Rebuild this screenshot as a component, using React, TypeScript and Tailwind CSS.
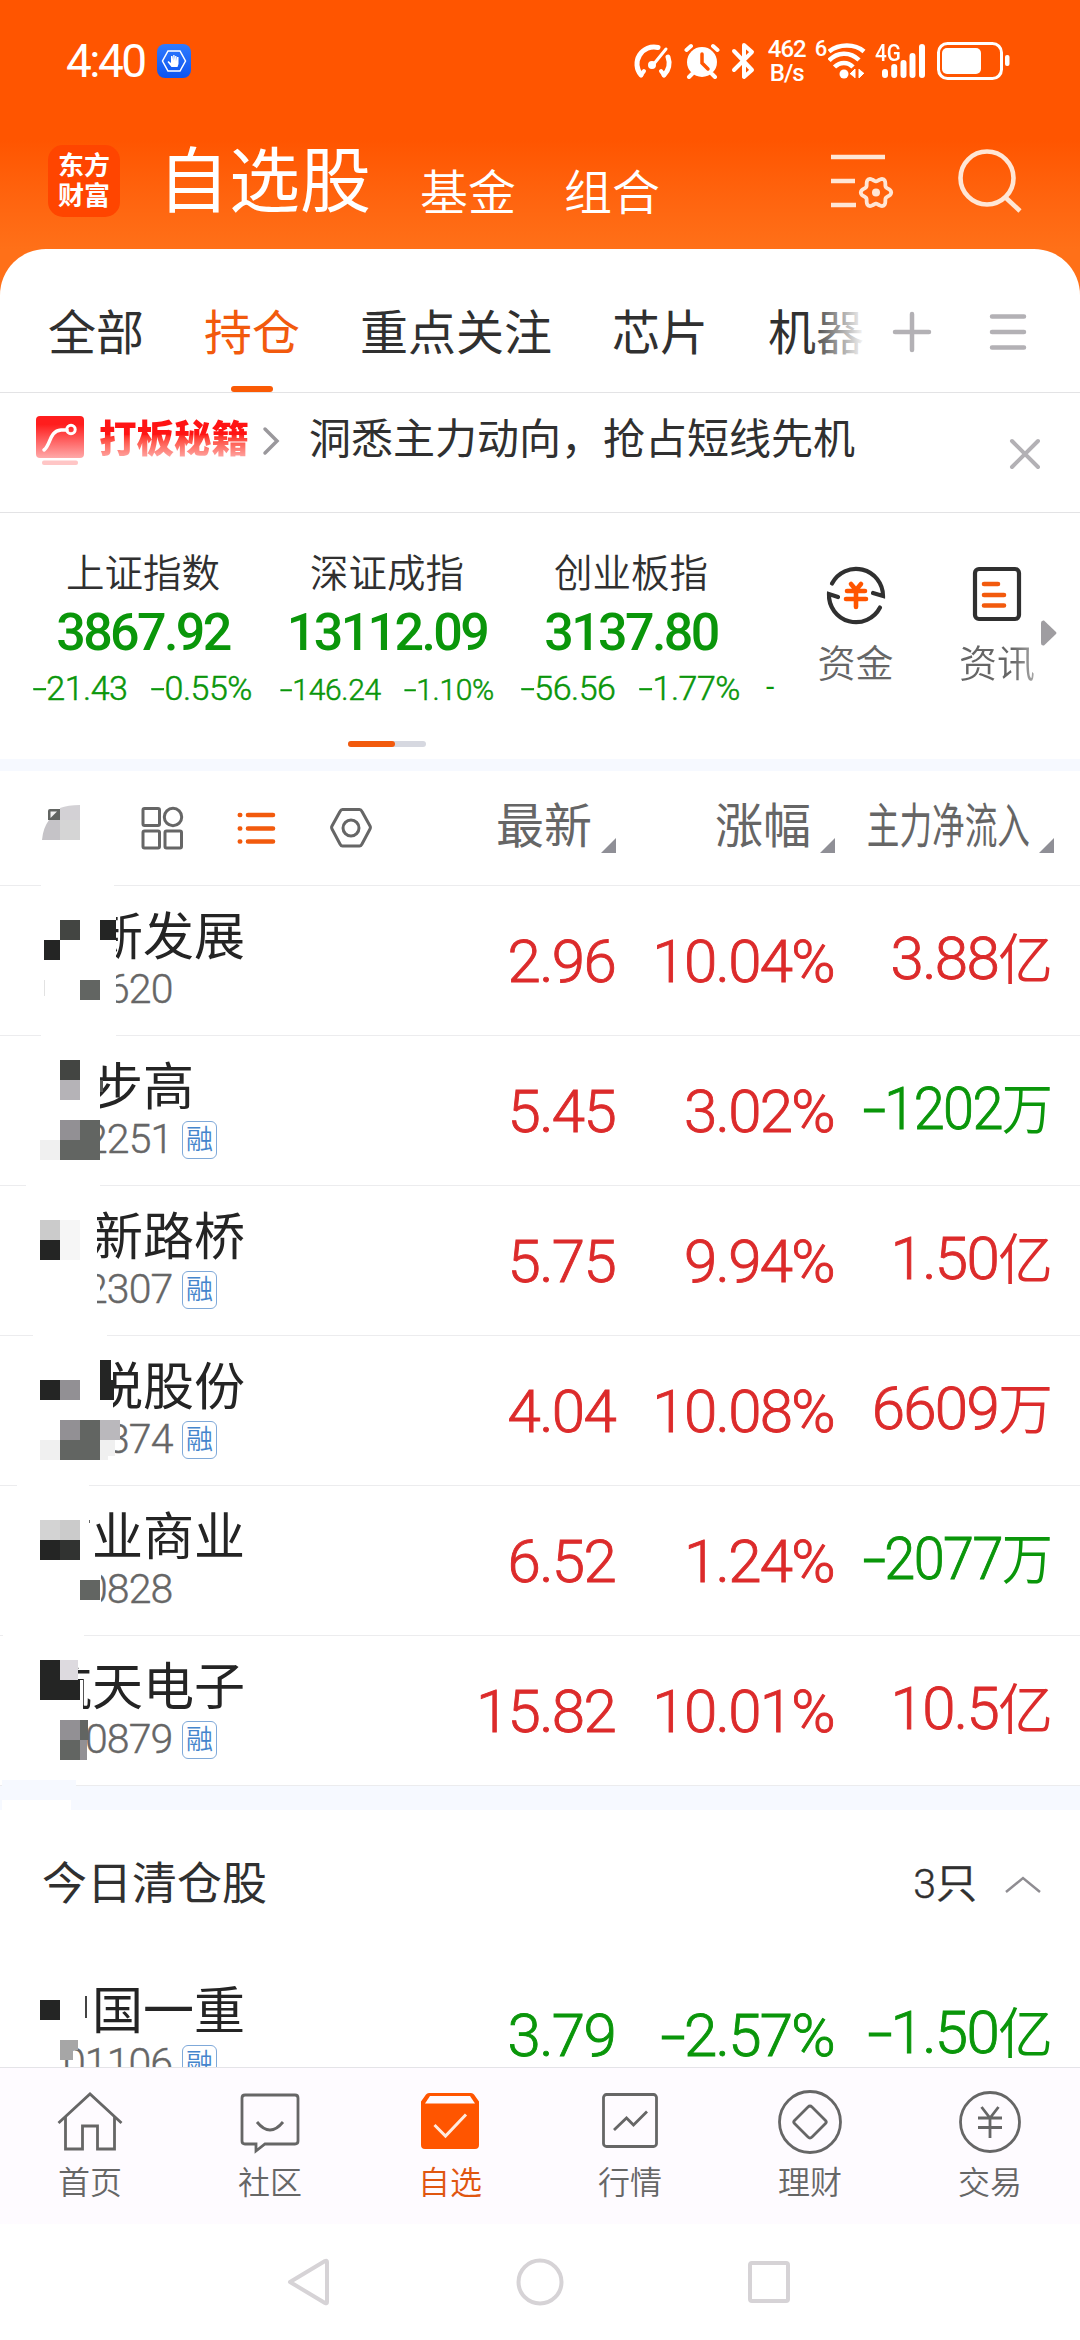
import { useState, type ReactNode } from "react";

type Block = [x: number, y: number, w: number, h: number, fill: string];

type Stock = {
  name: string;
  nameClass: string;
  code: string;
  codeClass: string;
  margin: boolean; // margin trading badge
  price: string;
  change: string;
  flow: string;
  flowClass: string;
  blocks: Block[];
};

const STOCKS: Stock[] = [
  {
    name: "新发展",
    nameClass: "pl-[92px]",
    code: "620",
    codeClass: "pl-[107px]",
    margin: false,
    price: "2.96",
    change: "10.04%",
    flow: "3.88亿",
    flowClass: "",
    blocks: [
      [41, -1, 73, 1, "#fff"],
      [41, 0, 75, 150, "#fff"],
      [44, 94, 1, 16, "#e2e2e2"],
      [60, 34, 20, 20, "#434542"],
      [44, 54, 16, 20, "#242524"],
      [100, 34, 16, 20, "#242524"],
      [80, 94, 20, 20, "#626562"],
    ],
  },
  {
    name: "步高",
    nameClass: "pl-[92px]",
    code: "2251",
    codeClass: "pl-[85px]",
    margin: true,
    price: "5.45",
    change: "3.02%",
    flow: "-1202万",
    flowClass: "scale-x-[0.93]",
    blocks: [
      [26, 0, 74, 150, "#fff"],
      [60, 24, 20, 20, "#434542"],
      [60, 44, 20, 20, "#b5b3b7"],
      [100, 44, 3, 12, "#565856"],
      [60, 84, 20, 20, "#929094"],
      [80, 84, 20, 40, "#626562"],
      [60, 104, 20, 20, "#626562"],
      [40, 104, 20, 20, "#f0f0f0"],
    ],
  },
  {
    name: "新路桥",
    nameClass: "pl-[92px]",
    code: "2307",
    codeClass: "pl-[85px]",
    margin: true,
    price: "5.75",
    change: "9.94%",
    flow: "1.50亿",
    flowClass: "",
    blocks: [
      [33, 80, 64, 3, "#fff"],
      [33, 126, 74, 24, "#fff"],
      [33, 0, 64, 150, "#fff"],
      [97, 100, 3, 12, "#fff"],
      [40, 34, 20, 20, "#cbcbcb"],
      [60, 34, 20, 40, "#f6f6f6"],
      [40, 54, 20, 20, "#242524"],
    ],
  },
  {
    name: "悦股份",
    nameClass: "pl-[92px]",
    code: "374",
    codeClass: "pl-[107px]",
    margin: true,
    price: "4.04",
    change: "10.08%",
    flow: "6609万",
    flowClass: "",
    blocks: [
      [17, 0, 72, 150, "#fff"],
      [80, 0, 33, 84, "#fff"],
      [80, 84, 35, 42, "#fff"],
      [40, 44, 20, 20, "#242524"],
      [60, 44, 20, 20, "#929094"],
      [100, 24, 11, 40, "#242524"],
      [111, 44, 3, 20, "#242524"],
      [60, 84, 20, 20, "#929094"],
      [80, 84, 20, 20, "#626562"],
      [100, 84, 20, 20, "#bab8bc"],
      [40, 104, 20, 20, "#f0f0f0"],
      [60, 104, 40, 20, "#626562"],
      [100, 104, 15, 16, "#f0f0f0"],
      [100, 120, 8, 4, "#f0f0f0"],
    ],
  },
  {
    name: "业商业",
    nameClass: "pl-[92px]",
    code: "0828",
    codeClass: "pl-[85px]",
    margin: false,
    price: "6.52",
    change: "1.24%",
    flow: "-2077万",
    flowClass: "scale-x-[0.93]",
    blocks: [
      [3, 130, 81, 20, "#fff"],
      [80, 84, 21, 42, "#fff"],
      [89, 34, 1, 3, "#666"],
      [40, 34, 20, 20, "#d3d3d3"],
      [60, 34, 20, 20, "#cbcbcb"],
      [40, 54, 20, 20, "#242524"],
      [60, 54, 20, 20, "#313331"],
      [80, 94, 20, 20, "#626562"],
    ],
  },
  {
    name: "航天电子",
    nameClass: "pl-[41px]",
    code: "0879",
    codeClass: "pl-[85px]",
    margin: true,
    price: "15.82",
    change: "10.01%",
    flow: "10.5亿",
    flowClass: "",
    blocks: [
      [2, 144, 74, 6, "#f6f9ff"],
      [40, 14, 38, 70, "#fff"],
      [76, 44, 7, 40, "#fff"],
      [40, 24, 20, 40, "#242524"],
      [60, 24, 18, 20, "#dddadf"],
      [60, 44, 20, 20, "#242524"],
      [60, 84, 20, 20, "#929094"],
      [80, 84, 8, 20, "#626562"],
      [60, 104, 20, 20, "#626562"],
      [80, 104, 7, 20, "#929094"],
    ],
  },
];

const CLEARED: Stock = {
  name: "国一重",
  nameClass: "pl-[92px]",
  code: "01106",
  codeClass: "pl-[63px]",
  margin: true,
  price: "3.79",
  change: "-2.57%",
  flow: "-1.50亿",
  flowClass: "",
  blocks: [
    [40, 40, 20, 20, "#242524"],
    [85, 36, 2, 22, "#444"],
    [60, 80, 13, 20, "#a6a6a6"],
    [73, 80, 5, 10, "#a6a6a6"],
  ],
};

const INDICES = [
  { name: "上证指数", value: "3867.92", diff: "-21.43", pct: "-0.55%", small: false },
  { name: "深证成指", value: "13112.09", diff: "-146.24", pct: "-1.10%", small: true },
  { name: "创业板指", value: "3137.80", diff: "-56.56", pct: "-1.77%", small: false },
];

const TABS = ["全部", "持仓", "重点关注", "芯片", "机器"];

// six-lobed gear outline around (45, 40)
const GEAR = Array.from({ length: 72 }, (_, i) => {
  const a = (i * Math.PI) / 36;
  const r = 13.2 + 2 * Math.cos(6 * a);
  return `${(45 + r * Math.cos(a)).toFixed(2)},${(39.5 + r * Math.sin(a)).toFixed(2)}`;
}).join(" ");

// Figures with a widened minus sign
function Num({ text }: { text: string }) {
  if (!text.startsWith("-")) return <>{text}</>;
  return (
    <>
      <span className="inline-block origin-right scale-x-[1.5]">-</span>
      {text.slice(1)}
    </>
  );
}

function StatusBar() {
  return (
    <div className="flex h-[122px] items-center pl-[66px] text-white">
      <span className="text-[46px] leading-none tracking-[-2.500px]">4:40</span>
      <svg className="ml-[12px]" width="34" height="34" viewBox="0 0 34 34">
        <defs>
          <linearGradient id="badge" x1="0" y1="0" x2="0" y2="1">
            <stop offset="0" stopColor="#2f7bff" />
            <stop offset="1" stopColor="#0d54f0" />
          </linearGradient>
        </defs>
        <rect width="34" height="34" rx="8" fill="url(#badge)" />
        <path d="M11 7h12l5.500 10-5.500 10H11L5.500 17z" fill="none" stroke="#fff" strokeWidth="1.500" />
        <path d="M14 12v7l-2.500-2-1 1 4 5h6l1-3v-7h-1.500v4l-.6-5h-1.300v5l-.6-6h-1.300v5.500l-.7-4.500z" fill="#fff" />
      </svg>
      <svg className="ml-[442px]" width="40" height="36" viewBox="0 0 40 36" fill="none" stroke="#fff" strokeWidth="5" strokeLinecap="round">
        <path d="M8 32A17 17 0 0 1 25 4.500" />
        <path d="M35 14A17 17 0 0 1 31 32" />
        <path d="M8 32l3-4M31 32l-3-4" strokeWidth="4" />
        <path d="M20 22L33 6" strokeWidth="3" />
        <circle cx="19" cy="22" r="2" strokeWidth="4" />
      </svg>
      <svg className="ml-[11px]" width="36" height="36" viewBox="0 0 36 36" stroke="#fff" strokeLinecap="round">
        <circle cx="18" cy="19" r="15" fill="#fff" stroke="none" />
        <path d="M2.500 7L7 3M33.500 7L29 3" strokeWidth="4" />
        <path d="M8 31l-3 3M28 31l3 3" strokeWidth="4" />
        <path d="M18 11v9l6 6" fill="none" stroke="#ff5500" strokeWidth="3.500" />
      </svg>
      <svg className="ml-[11px]" width="24" height="38" viewBox="0 0 24 38" fill="none" stroke="#fff" strokeWidth="4" strokeLinejoin="round" strokeLinecap="round">
        <path d="M3 9l18 19-8 7V3l8 7L3 28" />
      </svg>
      <div className="ml-[13px] w-[38px] text-center text-[24px] leading-[24px] font-medium tracking-[-1px]">
        <div>462</div>
        <div>B/s</div>
      </div>
      <span className="-mt-[24px] ml-[9px] w-[13px] text-[22px] leading-none font-medium">6</span>
      <svg width="38" height="36" viewBox="0 0 38 36" fill="none" stroke="#fff" strokeWidth="4.500">
        <path d="M1 8.500C11 .5 27 .5 36 8.500" />
        <path d="M1 17.500C9 9 22 8 31 17" />
        <path d="M6.500 24C12 18.500 20 18.500 25 24" />
        <circle cx="16" cy="31" r="4.500" fill="#fff" stroke="none" />
        <path d="M22 31l5-5v9M36 30l-5 5v-9" fill="#fff" strokeWidth="1" />
      </svg>
      <div className="relative ml-[9px] h-[36px] w-[52px]">
        <svg width="52" height="36" viewBox="0 0 52 36" stroke="#fff" strokeWidth="6" strokeLinecap="round">
          <path d="M10 29v3M19.200 24v8M28.500 20v12M37.500 13v19M47 4v28" />
        </svg>
        <span className="absolute -top-[3px] left-0 origin-left scale-x-[0.86] text-[24px] leading-[26px] font-medium">4G</span>
      </div>
      <svg className="ml-[10px]" width="74" height="38" viewBox="0 0 74 38">
        <rect x="1.500" y="1.500" width="63" height="35" rx="9" fill="none" stroke="#fff" strokeWidth="3" />
        <rect x="5" y="6" width="39" height="26" rx="5" fill="#fff" />
        <rect x="68" y="13" width="4.500" height="11" rx="2" fill="#fff" />
      </svg>
    </div>
  );
}

function Header() {
  return (
    <header className="flex h-[127px] items-start pt-[23px] pl-[48px] text-white">
      <div className="flex h-[72px] w-[72px] flex-col items-center justify-center rounded-[15px] bg-[#ff4500] text-[26px] leading-[30px] font-bold">
        <span>东方</span>
        <span>财富</span>
      </div>
      <span className="ml-[38px] text-[71px] leading-[74px]">自选股</span>
      <span className="mt-[22px] ml-[49px] text-[48px] leading-[54px] font-[350]">基金</span>
      <span className="mt-[22px] ml-[48px] text-[48px] leading-[54px] font-[350]">组合</span>
      <svg className="mt-[8px] ml-[171px]" width="64" height="58" viewBox="0 0 64 58" fill="none" stroke="#ffe6d5" strokeWidth="4.600">
        <path d="M0 4h54M0 28h24M0 52h25" />
        <polygon points={GEAR} strokeWidth="3.800" strokeLinejoin="round" />
        <circle cx="45" cy="39.500" r="4" fill="#ffe6d5" stroke="none" />
      </svg>
      <svg className="mt-[2px] ml-[62px]" width="66" height="66" viewBox="0 0 66 66" fill="none" stroke="#ffe6d5" strokeWidth="4.600">
        <circle cx="30" cy="31" r="26.500" />
        <path d="M48 50l15 14" />
      </svg>
    </header>
  );
}

function Tabs() {
  const [active, setActive] = useState("持仓");
  return (
    <nav className="relative flex h-[144px] items-center border-b border-[#e3e3e5] pl-[48px]">
      <div className="flex h-full w-[814px] gap-[60px]">
        {TABS.map((tab) => (
          <button
            key={tab}
            onClick={() => setActive(tab)}
            className={`flex h-full shrink-0 flex-col items-center pt-[53px] text-[48px] leading-[64px] ${
              tab === active ? "text-[#f25a0d]" : "text-[#303030]"
            }`}
          >
            {tab}
            {tab === active && <span className="mt-auto h-[6px] w-[42px] rounded-full bg-[#fa5a05]" />}
          </button>
        ))}
      </div>
      <div className="absolute top-[40px] left-[808px] h-[80px] w-[58px] bg-gradient-to-r from-white/0 to-white" />
      <svg className="mt-[22px] ml-[30px]" width="40" height="42" viewBox="0 0 40 42" stroke="#b3b1b5" strokeWidth="4.500" strokeLinecap="round">
        <path d="M3 21h34M20 3v36" />
      </svg>
      <svg className="mt-[22px] ml-[57px]" width="38" height="38" viewBox="0 0 38 38" stroke="#b3b1b5" strokeWidth="4.500" strokeLinecap="round">
        <path d="M3 3.500h32M3 19h32M3 34.500h32" />
      </svg>
    </nav>
  );
}

function Banner() {
  return (
    <div className="flex h-[120px] items-start border-b border-[#e3e3e5] pt-[23px] pl-[36px]">
      <svg width="48" height="49" viewBox="0 0 48 49">
        <defs>
          <linearGradient id="promo" x1="0" y1="0" x2="0" y2="1">
            <stop offset="0.2" stopColor="#ff1d1d" />
            <stop offset="1" stopColor="#ffa9a9" />
          </linearGradient>
        </defs>
        <rect width="48" height="42" rx="4" fill="url(#promo)" />
        <rect x="6" y="44.500" width="36" height="4.500" rx="2" fill="#ffc6c6" />
        <path d="M8 34c7-5 5-19 17-20h6" fill="none" stroke="#fff" strokeWidth="3.500" strokeLinecap="round" />
        <circle cx="35" cy="13.500" r="4.200" fill="none" stroke="#fff" strokeWidth="3" />
      </svg>
      <span className="ml-[15px] bg-gradient-to-b from-[#ff1414] from-40% to-[#ffadad] to-95% bg-clip-text text-[37.500px] leading-[46px] font-black text-transparent">
        打板秘籍
      </span>
      <svg className="mt-[10px] ml-[13px]" width="18" height="30" viewBox="0 0 18 30" fill="none" stroke="#9a989c" strokeWidth="3.500" strokeLinecap="round">
        <path d="M3 3l12 12L3 27" />
      </svg>
      <span className="ml-[29px] text-[42px] leading-[48px] text-[#303030]">洞悉主力动向，抢占短线先机</span>
      <svg className="mt-[22px] ml-[154px]" width="32" height="32" viewBox="0 0 32 32" stroke="#b3b1b5" strokeWidth="4" strokeLinecap="round">
        <path d="M3 3l26 26M29 3L3 29" />
      </svg>
    </div>
  );
}

function Indices() {
  return (
    <section className="relative flex h-[246px] pl-[21px]">
      {INDICES.map((idx) => (
        <div key={idx.name} className="flex w-[244px] flex-col items-center pt-[37px] text-[#0a960a]">
          <span className="text-[38.500px] leading-[48px] font-[350] text-[#303030]">{idx.name}</span>
          <span className="mt-[5px] text-[52px] leading-[60px] font-medium tracking-[-2.600px]">{idx.value}</span>
          <span
            className={`mt-[5px] flex h-[40px] items-center font-[350] whitespace-nowrap [-webkit-text-stroke:0.500px_currentColor] ${
              idx.small ? "gap-[27px] pt-[2px] pl-[4px] text-[30px] tracking-[-0.300px]" : "gap-[28px] pl-[3px] text-[34px] tracking-[-0.500px]"
            }`}
          >
            <span>
              <Num text={idx.diff} />
            </span>
            <span>
              <Num text={idx.pct} />
            </span>
          </span>
        </div>
      ))}
      <span className="mt-[154px] ml-[13px] w-[12px] text-[30px] leading-[40px] text-[#0a960a]">-</span>
      <div className="flex w-[150px] flex-col items-center pt-[51px] pl-[5px]">
        <svg width="62" height="62" viewBox="0 0 62 62" fill="none" stroke="#303030" strokeWidth="4.200" strokeLinecap="round">
          <path d="M7 19.500A27 27 0 0 1 58 32l-10-3" />
          <path d="M55 43.500A27 27 0 0 1 4 30l9 3" />
          <path d="M26 20l5 6 5-6M22 27h18M21 35h20M31 26v17" stroke="#ff5500" strokeWidth="4.600" />
        </svg>
        <span className="mt-[16px] text-[38px] leading-[44px] font-[350] text-[#666]">资金</span>
      </div>
      <div className="flex w-[138px] flex-col items-center pt-[51px]">
        <svg width="52" height="62" viewBox="0 0 52 62" fill="none">
          <rect x="4" y="5" width="44" height="50" rx="4" stroke="#303030" strokeWidth="4.200" />
          <path d="M13 20h14M13 31h20M13 41.500h20" stroke="#f25a0d" strokeWidth="4.600" strokeLinecap="round" />
        </svg>
        <span className="mt-[16px] bg-gradient-to-r from-[#666] from-70% to-[#aaa] bg-clip-text text-[38px] leading-[44px] font-[350] text-transparent">
          资讯
        </span>
      </div>
      <svg className="absolute top-[107px] left-[1041px]" width="16" height="26" viewBox="0 0 16 26">
        <path d="M0 3q0-3 3-2.500L15 12q1 1 0 2L3 25.500Q0 26 0 23z" fill="#9f9da1" />
      </svg>
      <div className="absolute top-[228px] left-[348px] flex h-[6px] w-[78px] rounded-full bg-[#d6d8e0]">
        <span className="w-[47px] rounded-full bg-[#f25a0d]" />
      </div>
    </section>
  );
}

function SortHead({ children, className }: { children: ReactNode; className: string }) {
  return (
    <div className={`flex items-end justify-end ${className}`}>
      {children}
      <svg className="-mb-[4px] shrink-0" width="15" height="15" viewBox="0 0 15 15">
        <path d="M15 0v15H0z" fill="#8f8f96" />
      </svg>
    </div>
  );
}

function TableHead() {
  return (
    <div className="flex h-[115px] items-start border-b border-[#ececee] pt-[34px] text-[48px] leading-[44px] text-[#666]">
      <svg className="ml-[42px]" width="38" height="36" viewBox="0 0 38 36">
        <path d="M18 3q8-3 20-3v18H18z" fill="#d3d1d5" />
        <path d="M18 15v20H0q1-12 7-20z" fill="#c5c3c7" />
        <path d="M18 15h20v20H18z" fill="#d5d5d5" />
        <path d="M6 6q0-2 2-2h10v11H6z" fill="#626562" />
        <path d="M8.500 13V6.500H15z" fill="#f2f2f2" />
      </svg>
      <svg className="ml-[60px]" width="44" height="46" viewBox="0 0 44 46" fill="none" stroke="#666" strokeWidth="3">
        <rect x="3" y="3.500" width="16.500" height="17" rx="1.500" />
        <circle cx="33" cy="12" r="8.700" />
        <rect x="3" y="26" width="16.500" height="17" rx="1.500" />
        <rect x="25" y="26" width="16.500" height="17" rx="1.500" />
      </svg>
      <svg className="mt-[6px] ml-[53px]" width="40" height="36" viewBox="0 0 40 36" stroke="#f25a0d" strokeWidth="4.600" strokeLinecap="round">
        <path d="M2.800 4h.4M11 4h25M2.800 17.500h.4M11 17.500h25M2.800 30.500h.4M11 30.500h25" />
      </svg>
      <svg className="mt-[2px] ml-[53px]" width="42" height="42" viewBox="0 0 42 42" fill="none" stroke="#666" strokeWidth="3" strokeLinejoin="round">
        <path d="M12.500 2.500h17q1.500 0 2.500 2L40 19q.8 1.500 0 3l-8 15q-1 2-2.500 2h-17q-1.500 0-2.500-2L2 22q-.8-1.500 0-3l8-14.500q1-2 2.500-2z" />
        <circle cx="21" cy="21" r="8" />
      </svg>
      <SortHead className="w-[244px] gap-[9px]">最新</SortHead>
      <SortHead className="w-[219px] gap-[9px]">涨幅</SortHead>
      <SortHead className="w-[219px]">
        <span className="w-[240px] shrink-0 origin-right -translate-x-[9px] scale-x-[0.68]">主力净流入</span>
      </SortHead>
    </div>
  );
}

function StockRow({ stock }: { stock: Stock }) {
  const color = (v: string) => (v.startsWith("-") ? "text-[#0a960a]" : "text-[#dc2b2b]");
  return (
    <div className="relative flex h-[150px] shrink-0 border-b border-[#ececee] bg-white">
      <div className="w-[397px] pt-[22px]">
        <div className={`text-[51px] leading-[60px] text-[#242424] ${stock.nameClass}`}>{stock.name}</div>
        <div
          className={`flex h-[44px] items-center text-[41px] font-[350] tracking-[-0.900px] text-[#666] ${stock.codeClass}`}
        >
          <span className="[-webkit-text-stroke:0.400px_currentColor]">{stock.code}</span>
          {stock.margin && (
            <span className="absolute left-[182px] flex h-[38px] w-[35px] items-center justify-center rounded-[6px] border-[1.500px] border-[#7fa9d9] text-[27px] leading-none tracking-normal text-[#4585cc]">
              融
            </span>
          )}
        </div>
      </div>
      <div className="flex text-right text-[60px] leading-[70px] font-[350] tracking-[-1.700px] whitespace-nowrap [-webkit-text-stroke:0.900px_currentColor]">
        <div className={`w-[218px] pt-[41px] ${color(stock.change)}`}>
          <Num text={stock.price} />
        </div>
        <div className={`w-[219px] pt-[41px] ${color(stock.change)}`}>
          <Num text={stock.change} />
        </div>
        <div className={`w-[219px] pt-[38px] ${color(stock.flow)}`}>
          <div className={`origin-right ${stock.flowClass}`}>
            <Num text={stock.flow.slice(0, -1)} />
            <span className="text-[55px] tracking-normal [-webkit-text-stroke:0]">{stock.flow.slice(-1)}</span>
          </div>
        </div>
      </div>
      {/* privacy mosaic */}
      <svg className="absolute top-0 left-0 overflow-visible" width="130" height="150" shapeRendering="crispEdges">
        {stock.blocks.map(([x, y, w, h, fill], i) => (
          <rect key={i} x={x} y={y} width={w} height={h} fill={fill} />
        ))}
      </svg>
    </div>
  );
}

function NavItem({ label, active, children }: { label: string; active?: boolean; children: ReactNode }) {
  return (
    <button className={`flex w-[180px] flex-col items-center pt-[20px] ${active ? "text-[#e0560f]" : "text-[#666]"}`}>
      <svg width="68" height="68" viewBox="0 0 68 68" fill="none" stroke="currentColor" strokeWidth="2.800">
        {children}
      </svg>
      <span className="mt-[8px] text-[32px] leading-[38px] font-[350]">{label}</span>
    </button>
  );
}

function BottomNav() {
  return (
    <nav className="flex h-[157px] shrink-0 border-t border-[#e4e4e8] bg-[#fefbff]">
      <NavItem label="首页">
        <path d="M2.500 35L34 6l31.500 29" />
        <path d="M9.500 29v32h17V38h15v23h17V29" />
      </NavItem>
      <NavItem label="社区">
        <path d="M9 7h50q3 0 3 3v43q0 3-3 3H29l-9 7v-7H9q-3 0-3-3V10q0-3 3-3z" />
        <path d="M21 34q13 16 26 0" />
      </NavItem>
      <NavItem label="自选" active>
        <path d="M13 5h42q2 0 3 1.500l5 7V57q0 4-4 4H9q-4 0-4-4V13.500l5-7Q11 5 13 5z" fill="#ff5500" stroke="none" />
        <path d="M14 8h40l5 7.500H9z" fill="#fefbff" stroke="none" />
        <path d="M18.500 37l11 11L50 26.500" stroke="#ffeadd" strokeWidth="3" />
      </NavItem>
      <NavItem label="行情">
        <rect x="7.500" y="6.500" width="53" height="52" rx="3" />
        <path d="M18 42l12.500-12 7 7L51 23.500" />
      </NavItem>
      <NavItem label="理财">
        <circle cx="34" cy="34" r="30.500" />
        <path d="M32 19q2-2 4 0l13.500 13.500q1.500 1.500 0 3L36 49q-2 2-4 0L18.500 35.500q-1.500-1.500 0-3z" />
      </NavItem>
      <NavItem label="交易">
        <circle cx="34" cy="34" r="29.500" />
        <path d="M25.500 19l8.500 11 8.500-11M22 30h24M22 39.500h24M34 30v20" />
      </NavItem>
    </nav>
  );
}

export default function App() {
  return (
    <div className="flex h-[2340px] w-[1080px] flex-col overflow-hidden bg-gradient-to-b from-[#ff5500] from-[140px] to-[#ff7018] to-[249px] font-['Roboto','Noto_Sans_CJK_SC',sans-serif]">
      <StatusBar />
      <Header />
      <main className="flex min-h-0 flex-1 flex-col overflow-hidden rounded-t-[46px] bg-white">
        <Tabs />
        <Banner />
        <Indices />
        <div className="h-[12px] shrink-0 bg-[#f6f9ff]" />
        <TableHead />
        {STOCKS.map((stock) => (
          <StockRow key={stock.code} stock={stock} />
        ))}
        <div className="h-[24px] shrink-0 overflow-hidden bg-[#f6f9ff]">
          <div className="mt-[14px] ml-[2px] h-[10px] w-[69px] bg-white" />
        </div>
        <div className="flex h-[150px] shrink-0 items-center pl-[42px] text-[#303030]">
          <span className="flex-1 text-[45px]">今日清仓股</span>
          <span className="text-[41px] font-[350] [-webkit-text-stroke:0.400px_currentColor]">3只</span>
          <svg className="mr-[38px] ml-[27px]" width="38" height="22" viewBox="0 0 38 22" fill="none" stroke="#8f8d92" strokeWidth="2.500">
            <path d="M2 18L19 4l17 14" />
          </svg>
        </div>
        <div className="h-[107px] shrink-0 overflow-hidden">
          <StockRow stock={CLEARED} />
        </div>
        <BottomNav />
        <div className="flex flex-1 items-center bg-white pl-[286px]">
          <svg width="46" height="50" viewBox="0 0 46 50" fill="none" stroke="#d6d3d6" strokeWidth="4" strokeLinejoin="round">
            <path d="M4 25L39 4q2-1 2 1v40q0 2-2 1z" />
          </svg>
          <svg className="ml-[183px]" width="50" height="50" viewBox="0 0 50 50" fill="none" stroke="#d6d3d6" strokeWidth="4">
            <circle cx="25" cy="25" r="21.500" />
          </svg>
          <svg className="ml-[181px]" width="46" height="46" viewBox="0 0 46 46" fill="none" stroke="#d6d3d6" strokeWidth="4">
            <rect x="4" y="4" width="38" height="38" rx="2" />
          </svg>
        </div>
      </main>
    </div>
  );
}
